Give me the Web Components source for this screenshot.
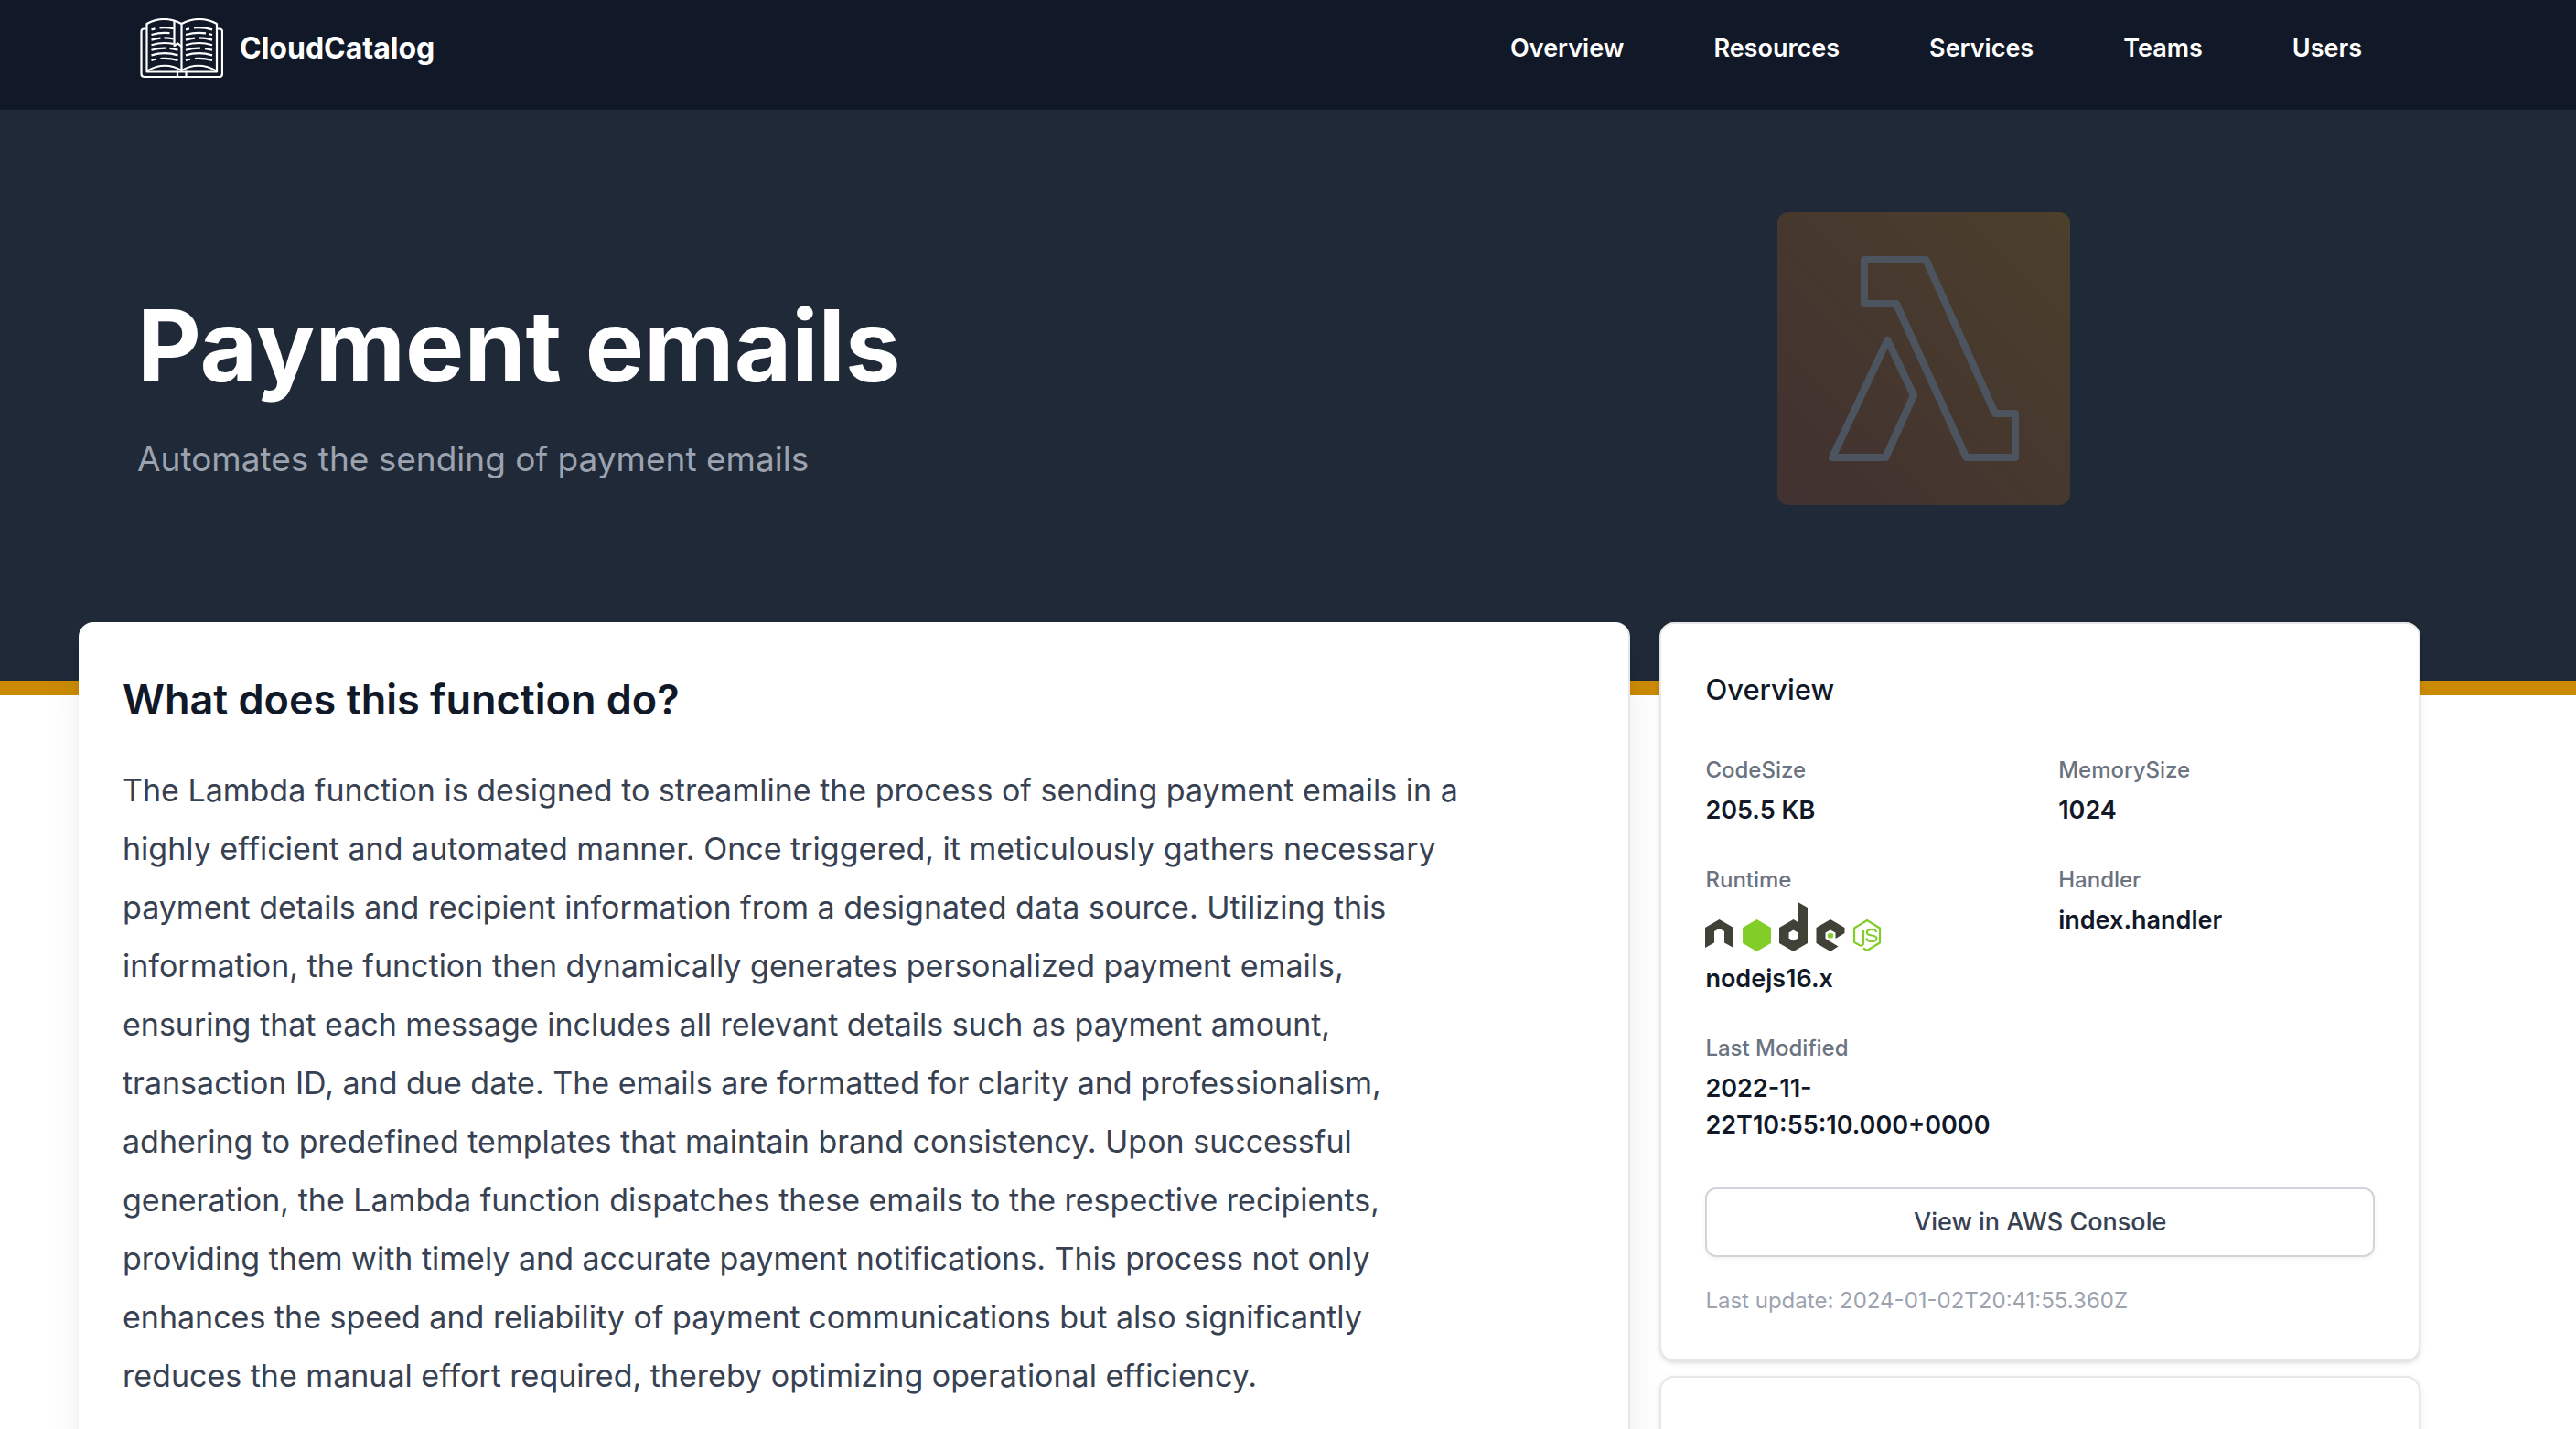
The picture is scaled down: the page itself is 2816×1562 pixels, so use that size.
<!DOCTYPE html>
<html lang="en">
<head>
<meta charset="utf-8">
<title>CloudCatalog – Payment emails</title>
<style>
html { scrollbar-width: none; }
body { margin: 0; background: #fff; font-family: Inter, "Liberation Sans", sans-serif; color: #111827; }
</style>
</head>
<body>
<catalog-header></catalog-header>
<page-hero heading="Payment emails" summary="Automates the sending of payment emails"></page-hero>
<page-columns>
  <doc-card heading="What does this function do?">The Lambda function is designed to streamline the process of sending payment emails in a highly efficient and automated manner. Once triggered, it meticulously gathers necessary payment details and recipient information from a designated data source. Utilizing this information, the function then dynamically generates personalized payment emails, ensuring that each message includes all relevant details such as payment amount, transaction ID, and due date. The emails are formatted for clarity and professionalism, adhering to predefined templates that maintain brand consistency. Upon successful generation, the Lambda function dispatches these emails to the respective recipients, providing them with timely and accurate payment notifications. This process not only enhances the speed and reliability of payment communications but also significantly reduces the manual effort required, thereby optimizing operational efficiency.</doc-card>
  <side-card slot="side">
    <overview-panel>
      <fact-item label="CodeSize">205.5 KB</fact-item>
      <fact-item label="MemorySize">1024</fact-item>
      <fact-item label="Runtime"><node-logo slot="media"></node-logo>nodejs16.x</fact-item>
      <fact-item label="Handler">index.handler</fact-item>
      <fact-item label="Last Modified">2022-11-22T10:55:10.000+0000</fact-item>
    </overview-panel>
  </side-card>
  <side-card slot="side" class="next"></side-card>
</page-columns>
<script>
const define = (name, html, setup) => {
  const tpl = document.createElement('template');
  tpl.innerHTML = html;
  customElements.define(name, class extends HTMLElement {
    constructor() {
      super();
      this.attachShadow({ mode: 'open' }).append(tpl.content.cloneNode(true));
    }
    connectedCallback() {
      for (const key of ['heading', 'summary', 'label']) {
        const el = this.shadowRoot.querySelector('[data-text=' + key + ']');
        if (el) el.textContent = this.getAttribute(key) || '';
      }
      if (setup) setup(this.shadowRoot);
    }
  });
};

/* Open book: a cover, two pages with arched text lines, and a ribbon */
define('book-logo', `
<style>:host{display:block;width:92px;height:66px}svg{display:block;width:100%;height:100%}</style>
<svg viewBox="0 0 92 66" fill="none" stroke="#fff" stroke-width="2.2" stroke-linecap="round" stroke-linejoin="round" aria-hidden="true">
  <path d="M8 11.500H5.500Q2.500 11.500 2.500 14.500V60.500Q2.500 64 6 64H87.500Q91 64 91 60.500V14.500Q91 11.500 88 11.500H86"/>
  <path d="M8.500 58.500V6Q27-4 46.500 6Q66-4 85 6V58.500H8.500"/>
  <path d="M46.500 6V57M10 57q18-10.500 36.500 0q18.500-10.500 37 0M42 58.500V64M51.500 58.500V64"/>
  <path d="M38.500 3V30l4-2.500 4 3.500"/>
  <path id="lines" stroke-linecap="butt"/>
</svg>`, root => {
  const rows = [
    [11.200, [0, 4, 9, 24], [0, 4, 9, 29]],
    [16.800, [0, 20], [0, 22, 25, 29]],
    [22.400, [0, 10, 14, 24], [0, 10, 14, 29]],
    [28, [0, 24], [0, 29]],
    [33.600, [0, 16, 20, 29], [0, 16, 21, 29]],
    [39.200, [0, 29], [0, 29]],
    [44.800, [0, 5, 10, 29], [0, 5, 10, 29]]
  ];
  const y = x => Math.pow((x - 14.5) / 14.5, 2) * 2.2;
  const seg = (x0, top, a, b) => {
    const mid = 2 * y((a + b) / 2) - (y(a) + y(b)) / 2;
    return `M${x0 + a} ${top + y(a)}Q${x0 + (a + b) / 2} ${top + mid} ${x0 + b} ${top + y(b)}`;
  };
  let d = '';
  for (const [top, left, right] of rows) {
    for (const [x0, cuts] of [[13.5, left], [51, right]]) {
      for (let i = 0; i < cuts.length; i += 2) d += seg(x0, top - 1, cuts[i], cuts[i + 1]);
    }
  }
  root.querySelector('#lines').setAttribute('d', d);
});

define('catalog-header', `
<style>
:host{display:block;background:#111827;color:#fff}
header{display:flex;align-items:center;justify-content:space-between;padding:20px 234px 34px 152px}
a{color:inherit;text-decoration:none}
.brand{display:flex;align-items:center;gap:18px;font-size:32px;font-weight:700;line-height:40px}
nav{display:flex;gap:98px;font-size:27px;font-weight:600;line-height:40px}
</style>
<header>
  <a class="brand" href="#"><book-logo></book-logo><span>CloudCatalog</span></a>
  <nav aria-label="Main"><a href="#">Overview</a><a href="#">Resources</a><a href="#">Services</a><a href="#">Teams</a><a href="#">Users</a></nav>
</header>`);

define('lambda-icon', `
<style>:host{display:block;width:320px;height:320px;opacity:.2}svg{display:block;width:100%;height:100%;border-radius:12px}</style>
<svg viewBox="0 0 80 80" aria-hidden="true">
  <defs><linearGradient id="g" x1="0" y1="1" x2="1" y2="0"><stop offset="0" stop-color="#C8511B"/><stop offset="1" stop-color="#F90"/></linearGradient></defs>
  <rect width="80" height="80" fill="url(#g)"/>
  <path d="M23.750 13H40.600L59.500 55H65V67H51.600L32.500 25H23.750ZM30.100 34.900L37.250 50L29.600 67H15Z" fill="none" stroke="#fff" stroke-width="2" stroke-linejoin="round"/>
</svg>`);

define('page-hero', `
<style>
:host{display:block;background:#1f2937;border-bottom:16px solid #ca8a04}
section{display:grid;grid-template-columns:13fr 10fr;padding:112px 171px 192px 150px}
.copy{align-self:center;padding-top:64px}
h1{margin:0;font-size:108px;line-height:120px;font-weight:700;color:#fff}
p{margin:36px 0 0;font-size:37px;line-height:56px;color:#9ca3af}
lambda-icon{justify-self:center}
</style>
<section><div class="copy"><h1 data-text="heading"></h1><p data-text="summary"></p></div><lambda-icon></lambda-icon></section>`);

define('page-columns', `
<style>
:host{display:block;padding:0 170px 0 86px;margin-top:-80px;position:relative}
main{display:grid;grid-template-columns:51fr 25fr;gap:32px}
aside{display:flex;flex-direction:column;gap:16px}
</style>
<main><slot></slot><aside><slot name="side"></slot></aside></main>`);

define('doc-card', `
<style>
:host{display:block;box-sizing:border-box;background:#fff;border-right:2px solid #e5e7eb;border-radius:16px;padding:50px 48px 96px;box-shadow:0 40px 50px -10px rgba(0,0,0,.1),0 16px 20px -12px rgba(0,0,0,.1)}
h2{margin:0 0 32px;font-size:45px;line-height:70px;font-weight:600}
p{margin:0;max-width:1464px;font-size:34px;line-height:64px;color:#374151}
</style>
<article><h2 data-text="heading"></h2><p><slot></slot></p></article>`);

define('side-card', `
<style>
:host{display:block;box-sizing:border-box;background:#fff;border:2px solid #e5e7eb;border-radius:16px;padding:48px;box-shadow:0 2px 6px rgba(0,0,0,.1),0 2px 4px -2px rgba(0,0,0,.1)}
:host(.next){min-height:160px}
</style><slot></slot>`);

define('overview-panel', `
<style>
:host{display:block}
h3{margin:0 0 48px;font-size:31px;line-height:48px;font-weight:500}
.facts{display:grid;grid-template-columns:1fr 1fr;gap:40px}
button{display:block;box-sizing:border-box;width:100%;height:76px;margin:48px 0 32px;border:2px solid #d1d5db;border-radius:12px;background:#fff;color:#374151;font:500 27px/40px Inter,"Liberation Sans",sans-serif;box-shadow:0 2px 4px rgba(0,0,0,.05)}
p{margin:0;font-size:24px;line-height:32px;color:#9ca3af}
</style>
<h3>Overview</h3>
<div class="facts"><slot></slot></div>
<button type="button">View in AWS Console</button>
<p>Last update: 2024-01-02T20:41:55.360Z</p>`);

define('fact-item', `
<style>
:host{display:block;min-width:0}
.label{margin-bottom:8px;font-size:24px;line-height:32px;font-weight:500;color:#6b7280}
.value{font-size:27px;line-height:40px;font-weight:600}
</style>
<div class="label" data-text="label"></div>
<slot name="media"></slot>
<div class="value"><slot></slot></div>`);

define('node-logo', `
<style>:host{display:block;height:64px}svg{display:block;width:194px;height:56px}</style>
<svg viewBox="0 0 194 56" role="img" aria-label="node js">
  <path fill="#404137" fill-rule="evenodd" d="M0 28L15.500 19L31 28V50L21 44.500V32L15.500 29L10 32V44.500L0 50ZM81 28L96.500 19L101.500 22V0L112 6V45L96.500 54L81 45ZM96.500 30.500L91.500 33.500V39.500L96.500 42.500L101.500 39.500V33.500ZM121.500 28L137 19L152.500 28V34L142.500 40V33.500L137 30.500L131.500 33.500V40L145.500 48.500L137 54L121.500 45Z"/>
  <path fill="#83cd29" d="M41 28L56.500 19L72 28V45L56.500 54L41 45ZM137 33.500L140 35V38.500L137 40L134 38.500V35Z"/>
  <path fill="none" stroke="#83cd29" stroke-width="2.200" stroke-linejoin="round" d="M173 31V44.500Q173 49 168.500 47L163 44V28.500L177 20L191 28.500V44.500L177 53L173 50.500M187 33Q187 30 182 30Q177 30 177 33Q177 36 182 36.500Q187.500 37 187.500 40Q187.500 43 182 43Q176.500 43 176.500 39.500"/>
</svg>`);
</script>
</body>
</html>
